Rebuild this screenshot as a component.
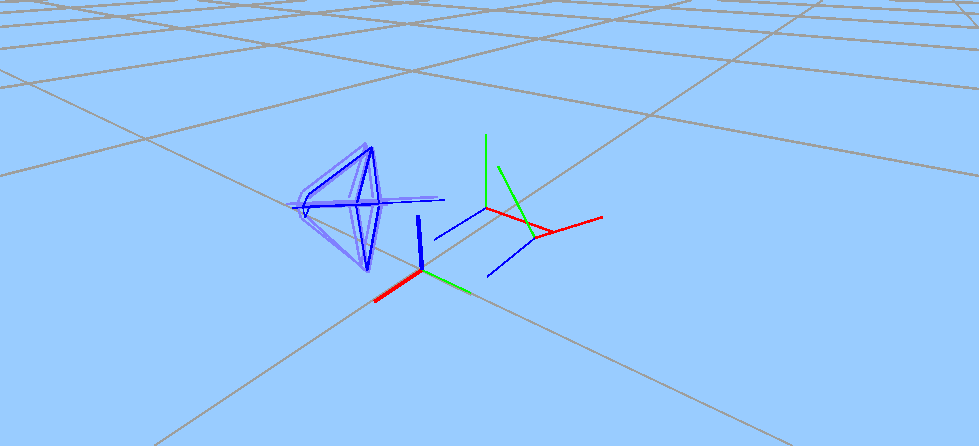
type Seg = [number, number, number, number, string, number];

const GRID = "#9e9e9c";
const LIGHT = "#8080ff";
const BLUE = "#0000ff";
const GREEN = "#00ff00";
const RED = "#ff0000";

const gridLines: Seg[] = [
  // shallow lines falling to the right
  [28, 0, 979, 176, GRID, 2.6],
  [197, 0, 979, 89, GRID, 2.6],
  [370, 0, 979, 50, GRID, 2.6],
  [543, 0, 979, 28, GRID, 2.6],
  [717, 0, 979, 14, GRID, 2.6],
  [889, 0, 979, 3, GRID, 2.6],
  // lines rising to the right
  [0, 176, 692, 0, GRID, 2.6],
  [0, 88, 560, 0, GRID, 2.6],
  [0, 49, 430, 0, GRID, 2.6],
  [0, 27, 307, 0, GRID, 2.6],
  [0, 13, 178, 0, GRID, 2.6],
  [0, 2, 48, 0, GRID, 2.6],
  // steep ones
  [0, 70, 793, 446, GRID, 2],
  [154, 446, 823, 0, GRID, 2],
  [953, 0, 979, 28, GRID, 2],
];

const cameraLight: Seg[] = [
  // pale copy of the camera
  [366, 143, 302, 192, LIGHT, 2.6],
  [302, 192, 297, 205, LIGHT, 2.6],
  [297, 205, 301, 218, LIGHT, 2.6],
  [366, 143, 349, 198, LIGHT, 2.6],
  [366, 143, 373, 198, LIGHT, 2.6],
  [349, 204, 361, 266, LIGHT, 2.6],
  [373, 204, 361, 266, LIGHT, 2.6],
  [301, 218, 361, 266, LIGHT, 2.4],
  [286, 204, 438, 197, LIGHT, 2.6],
  // halo round the dark camera
  [372, 147, 381, 203, LIGHT, 4],
  [381, 206, 368, 273, LIGHT, 4],
  [357, 206, 368, 273, LIGHT, 4],
  [370, 149, 356, 203, LIGHT, 4],
  [370, 150, 308, 198, LIGHT, 4],
  [305, 215, 367, 272, LIGHT, 2.6],
  [296, 206, 388, 203, LIGHT, 6],
];

const cameraDark: Seg[] = [
  [372, 147, 357, 203, BLUE, 2.6],
  [372, 147, 379, 204, BLUE, 2],
  [379, 206, 367, 271, BLUE, 2.6],
  [356, 205, 367, 271, BLUE, 2],
  [372, 147, 308, 195, BLUE, 2.2],
  [308, 195, 303, 207, BLUE, 2.2],
  [303, 208, 305, 218, BLUE, 1.4],
  [305, 218, 309, 208, BLUE, 1.8],
  [292, 208, 445, 200, BLUE, 1.6],
  [302, 207, 379, 204, BLUE, 2.4],
];

const axes: Seg[] = [
  // world frame
  [422, 271, 471, 295, GRID, 2],
  [422, 270, 471, 293, GREEN, 2],
  [422, 270, 374, 302, RED, 4],
  [422, 270, 418, 215, BLUE, 4.5],
  // first frame
  [486, 208, 486, 134, GREEN, 2.6],
  [486, 208, 553, 232, RED, 2.6],
  [486, 208, 434, 240, BLUE, 2],
  // second frame
  [535, 238, 498, 166, GREEN, 2.4],
  [535, 238, 603, 217, RED, 2.6],
  [535, 238, 487, 277, BLUE, 2],
];

function Lines({ items }: { items: Seg[] }) {
  return (
    <>
      {items.map(([x1, y1, x2, y2, color, width], i) => (
        <line key={i} x1={x1} y1={y1} x2={x2} y2={y2} stroke={color} strokeWidth={width} />
      ))}
    </>
  );
}

export default function App() {
  return (
    <div className="h-screen w-full overflow-hidden bg-[#99ccff]">
      <svg width="979" height="446" viewBox="0 0 979 446" shapeRendering="crispEdges" className="block">
        <Lines items={gridLines} />
        <Lines items={cameraLight} />
        <Lines items={cameraDark} />
        <Lines items={axes} />
      </svg>
    </div>
  );
}
